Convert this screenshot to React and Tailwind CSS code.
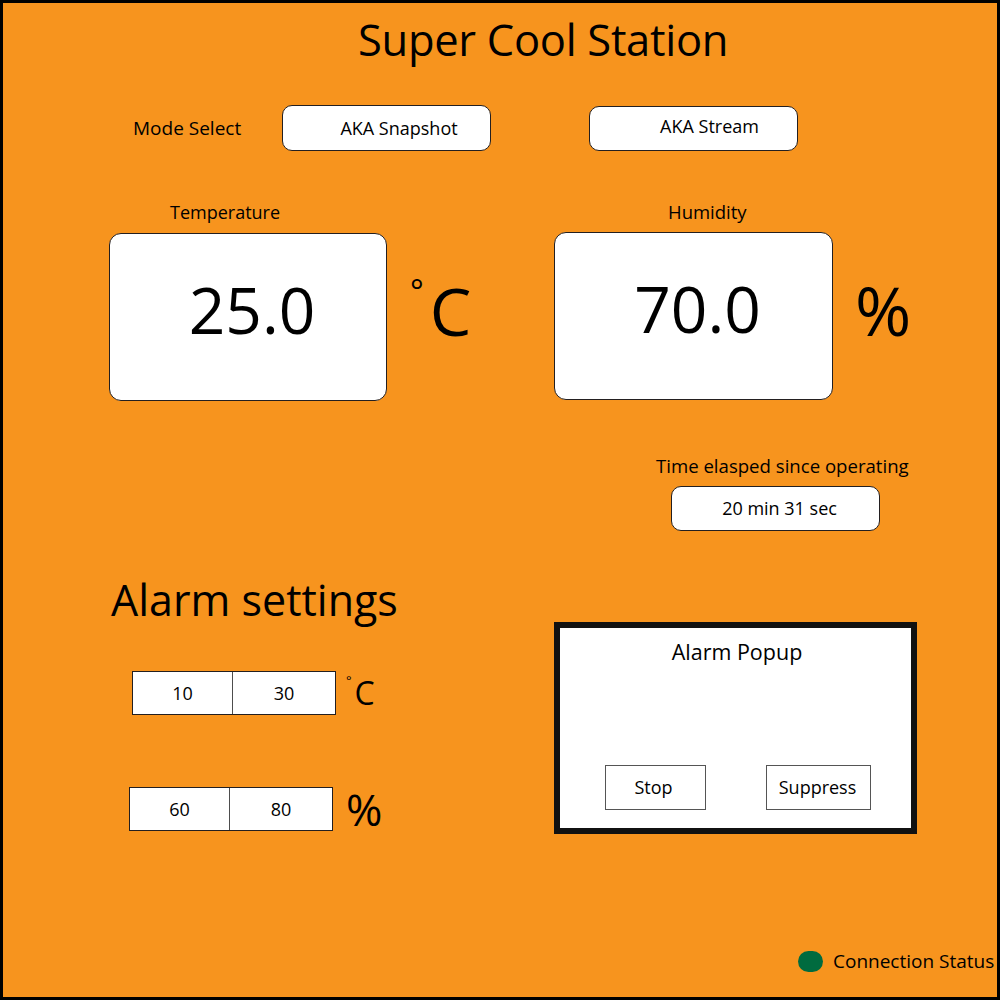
const Field = ({ children, className = "" }) => (
  <div
    className={`flex items-center bg-white border border-[#231f20] rounded-[10px] h-[45px] w-[209px] text-[18px] ${className}`}
  >
    {children}
  </div>
);

const Reading = ({ value, className = "" }) => (
  <div
    className={`flex items-center justify-center bg-white border border-[#231f20] rounded-[12px] h-[168px] text-[64px] leading-none pb-[14px] ${className}`}
  >
    {value}
  </div>
);

const RangeInput = ({ low, high, className = "" }) => (
  <div
    className={`flex h-[44px] w-[204px] bg-white border border-[#231f20] text-[18px] ${className}`}
  >
    <div className="w-[100px] flex items-center justify-center border-r border-[#4d4d4d]">
      {low}
    </div>
    <div className="flex-1 flex items-center justify-center">{high}</div>
  </div>
);

export default function App() {
  return (
    <div
      className="w-[1000px] h-[1000px] box-border border-[3px] border-black bg-[#f7941e] text-black flex flex-col"
      style={{ fontFamily: '"Open Sans", "Noto Sans", sans-serif' }}
    >
      {/* title */}
      <div className="h-[74px] flex items-center">
        <h1 className="ml-[355px] text-[43.5px] leading-none tracking-[-0.3px]">
          Super Cool Station
        </h1>
      </div>

      {/* mode select */}
      <div className="mt-[28px] h-[46px] flex items-center text-[18px]">
        <span className="ml-[130px] w-[149px] text-[19px]">Mode Select</span>
        <Field className="h-[46px] justify-center pl-[25px]">AKA Snapshot</Field>
        <Field className="ml-[98px] justify-center pl-[32px] pb-[4px]">
          AKA Stream
        </Field>
      </div>

      {/* sensor labels */}
      <div className="mt-[52px] h-[18px] flex items-center text-[18px]">
        <span className="ml-[167px] w-[498px]">Temperature</span>
        <span className="text-[18.5px]">Humidity</span>
      </div>

      {/* readings */}
      <div className="mt-[12px] flex items-center">
        <Reading value="25.0" className="ml-[106px] w-[278px] pl-[8px]" />
        <div className="w-[167px] flex items-start">
          <span className="ml-[23px] mt-[-16px] text-[32px] leading-none">°</span>
          <span className="ml-[6px] mt-[-14px] text-[66px] leading-none">C</span>
        </div>
        <Reading value="70.0" className="w-[279px] mt-[-2px] pl-[8px]" />
        <span className="ml-[22px] mt-[-14px] text-[68px] leading-none">%</span>
      </div>

      {/* elapsed time */}
      <div className="mt-[56px] h-[18px] flex items-center text-[18.6px]">
        <span className="ml-[653px]">Time elasped since operating</span>
      </div>
      <Field className="mt-[11px] ml-[668px] justify-center pl-[8px]">
        20 min 31 sec
      </Field>

      {/* alarms */}
      <div className="mt-[41px] flex">
        <div className="ml-[108px] w-[443px] flex flex-col">
          <h2 className="h-[56px] leading-[56px] text-[43px]">Alarm settings</h2>
          <div className="mt-[43px] ml-[21px] flex items-start">
            <RangeInput low="10" high="30" />
            <span className="ml-[10px] mt-[3px] text-[13px] leading-none">°</span>
            <span className="ml-[3px] mt-[6px] text-[32px] leading-none">C</span>
          </div>
          <div className="mt-[72px] ml-[18px] flex items-center">
            <RangeInput low="60" high="80" />
            <span className="ml-[13px] text-[44px] leading-none">%</span>
          </div>
        </div>

        <div className="mt-[50px] w-[363px] h-[212px] box-border border-[6px] border-[#111] bg-white flex flex-col">
          <div className="pt-[12px] text-center text-[21.5px] leading-[24px] pl-[3px]">
            Alarm Popup
          </div>
          <div className="mt-[101px] flex text-[18px]">
            <button className="ml-[45px] w-[101px] h-[45px] border border-[#555] flex items-center justify-center pr-[4px]">
              Stop
            </button>
            <button className="ml-[60px] w-[105px] h-[45px] border border-[#555] flex items-center justify-center pr-[2px]">
              Suppress
            </button>
          </div>
        </div>
      </div>

      {/* connection */}
      <div className="mt-auto mb-[24px] h-[24px] flex items-center">
        <span className="ml-[795px] w-[25px] h-[21px] rounded-full bg-[#006b3f]" />
        <span className="ml-[10px] text-[19px]">Connection Status</span>
      </div>
    </div>
  );
}
